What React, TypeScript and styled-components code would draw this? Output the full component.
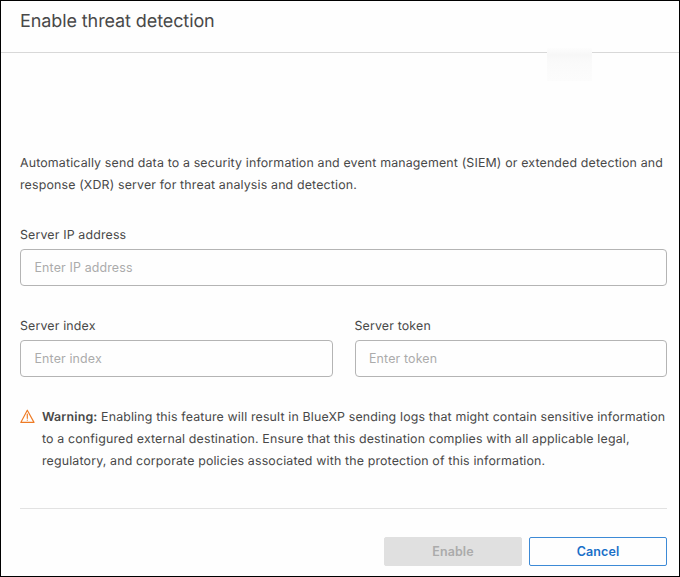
import React from 'react';
import styled, { createGlobalStyle } from 'styled-components';

const GlobalStyle = createGlobalStyle`
  * { box-sizing: border-box; }
  body { margin: 0; background: #fff; }
`;

const Dialog = styled.main`
  width: 680px;
  height: 577px;
  border: 1px solid #000;
  background: #fefefe;
  color: #484848;
  font-family: Inter, "Liberation Sans", sans-serif;
  font-size: 12.4px;
  line-height: 22px;
  letter-spacing: 0.15px;
  text-rendering: geometricPrecision;
  overflow: hidden;
`;

const Header = styled.header`
  position: relative;
  height: 52px;
  padding: 8px 19px 0;
  border-bottom: 1px solid #d8d8d8;
`;

const Title = styled.h1`
  margin: 0;
  font-size: 18px;
  font-weight: 400;
  line-height: 26px;
  letter-spacing: -0.1px;
`;

const Smudge = styled.span`
  position: absolute;
  left: 546px;
  top: 47px;
  width: 45px;
  height: 33px;
  background: linear-gradient(#fdfdfd, #f7f7f7 20%, #fafafa 45%, #fcfcfc);
`;

const Content = styled.div`
  padding: 99px 12px 0 19px;
`;

const Intro = styled.p`
  margin: 0;
  white-space: nowrap;
`;

const FieldRow = styled.div<{ $gap: number }>`
  display: flex;
  gap: 22px;
  margin-top: ${({ $gap }) => $gap}px;
`;

const Field = styled.label`
  display: flex;
  flex: 1;
  min-width: 0;
  flex-direction: column;
  gap: 3px;
`;

const Input = styled.input`
  width: 100%;
  height: 37px;
  padding: 0 13.5px;
  border: 1px solid #b4b4b4;
  border-radius: 4px;
  background: #fefefe;
  font: inherit;
  letter-spacing: inherit;
  color: inherit;
  outline: none;
  &::placeholder { color: #ababab; opacity: 1; }
`;

const Warning = styled.div`
  display: flex;
  gap: 7px;
  margin-top: 29px;
`;

const WarningIcon = styled.svg`
  flex: none;
  width: 15px;
  height: 15px;
  margin-top: 3px;
`;

const WarningText = styled.p`
  margin: 0;
  white-space: nowrap;
  strong { font-weight: 600; }
`;

const Footer = styled.footer`
  display: flex;
  justify-content: flex-end;
  gap: 7px;
  margin: 36px 12px 0 19px;
  padding-top: 28px;
  border-top: 1px solid #e2e2e2;
`;

const Button = styled.button<{ $outlined?: boolean }>`
  width: 138px;
  height: 29px;
  padding: 0;
  border: 1px solid ${({ $outlined }) => ($outlined ? '#3d8ad6' : '#e0e0e0')};
  border-radius: 2px;
  background: ${({ $outlined }) => ($outlined ? '#fefefe' : '#e0e0e0')};
  color: ${({ $outlined }) => ($outlined ? '#1a70c8' : '#ababab')};
  font: 600 12.5px/20px Inter, "Liberation Sans", sans-serif;
  letter-spacing: 0.1px;
`;

export default function App() {
  return (
    <>
      <GlobalStyle />
      <Dialog>
        <Header>
          <Title>Enable threat detection</Title>
          <Smudge />
        </Header>
        <Content>
          <Intro>
            Automatically send data to a security information and event management (SIEM) or extended detection and
            <br />
            response (XDR) server for threat analysis and detection.
          </Intro>
          <FieldRow $gap={28}>
            <Field>
              Server IP address
              <Input placeholder="Enter IP address" />
            </Field>
          </FieldRow>
          <FieldRow $gap={29}>
            <Field>
              Server index
              <Input placeholder="Enter index" />
            </Field>
            <Field>
              Server token
              <Input placeholder="Enter token" />
            </Field>
          </FieldRow>
          <Warning>
            <WarningIcon viewBox="0 0 15 15" fill="none" stroke="#ee7b25" strokeWidth="1.15" strokeLinejoin="round" strokeLinecap="round">
              <path d="M7.3 1.2 14 13.4H.8Z" />
              <path d="M7.3 5v4.3M7.3 11v.2" />
            </WarningIcon>
            <WarningText>
              <strong>Warning:</strong> Enabling this feature will result in BlueXP sending logs that might contain sensitive information
              <br />
              to a configured external destination. Ensure that this destination complies with all applicable legal,
              <br />
              regulatory, and corporate policies associated with the protection of this information.
            </WarningText>
          </Warning>
        </Content>
        <Footer>
          <Button disabled>Enable</Button>
          <Button $outlined>Cancel</Button>
        </Footer>
      </Dialog>
    </>
  );
}
